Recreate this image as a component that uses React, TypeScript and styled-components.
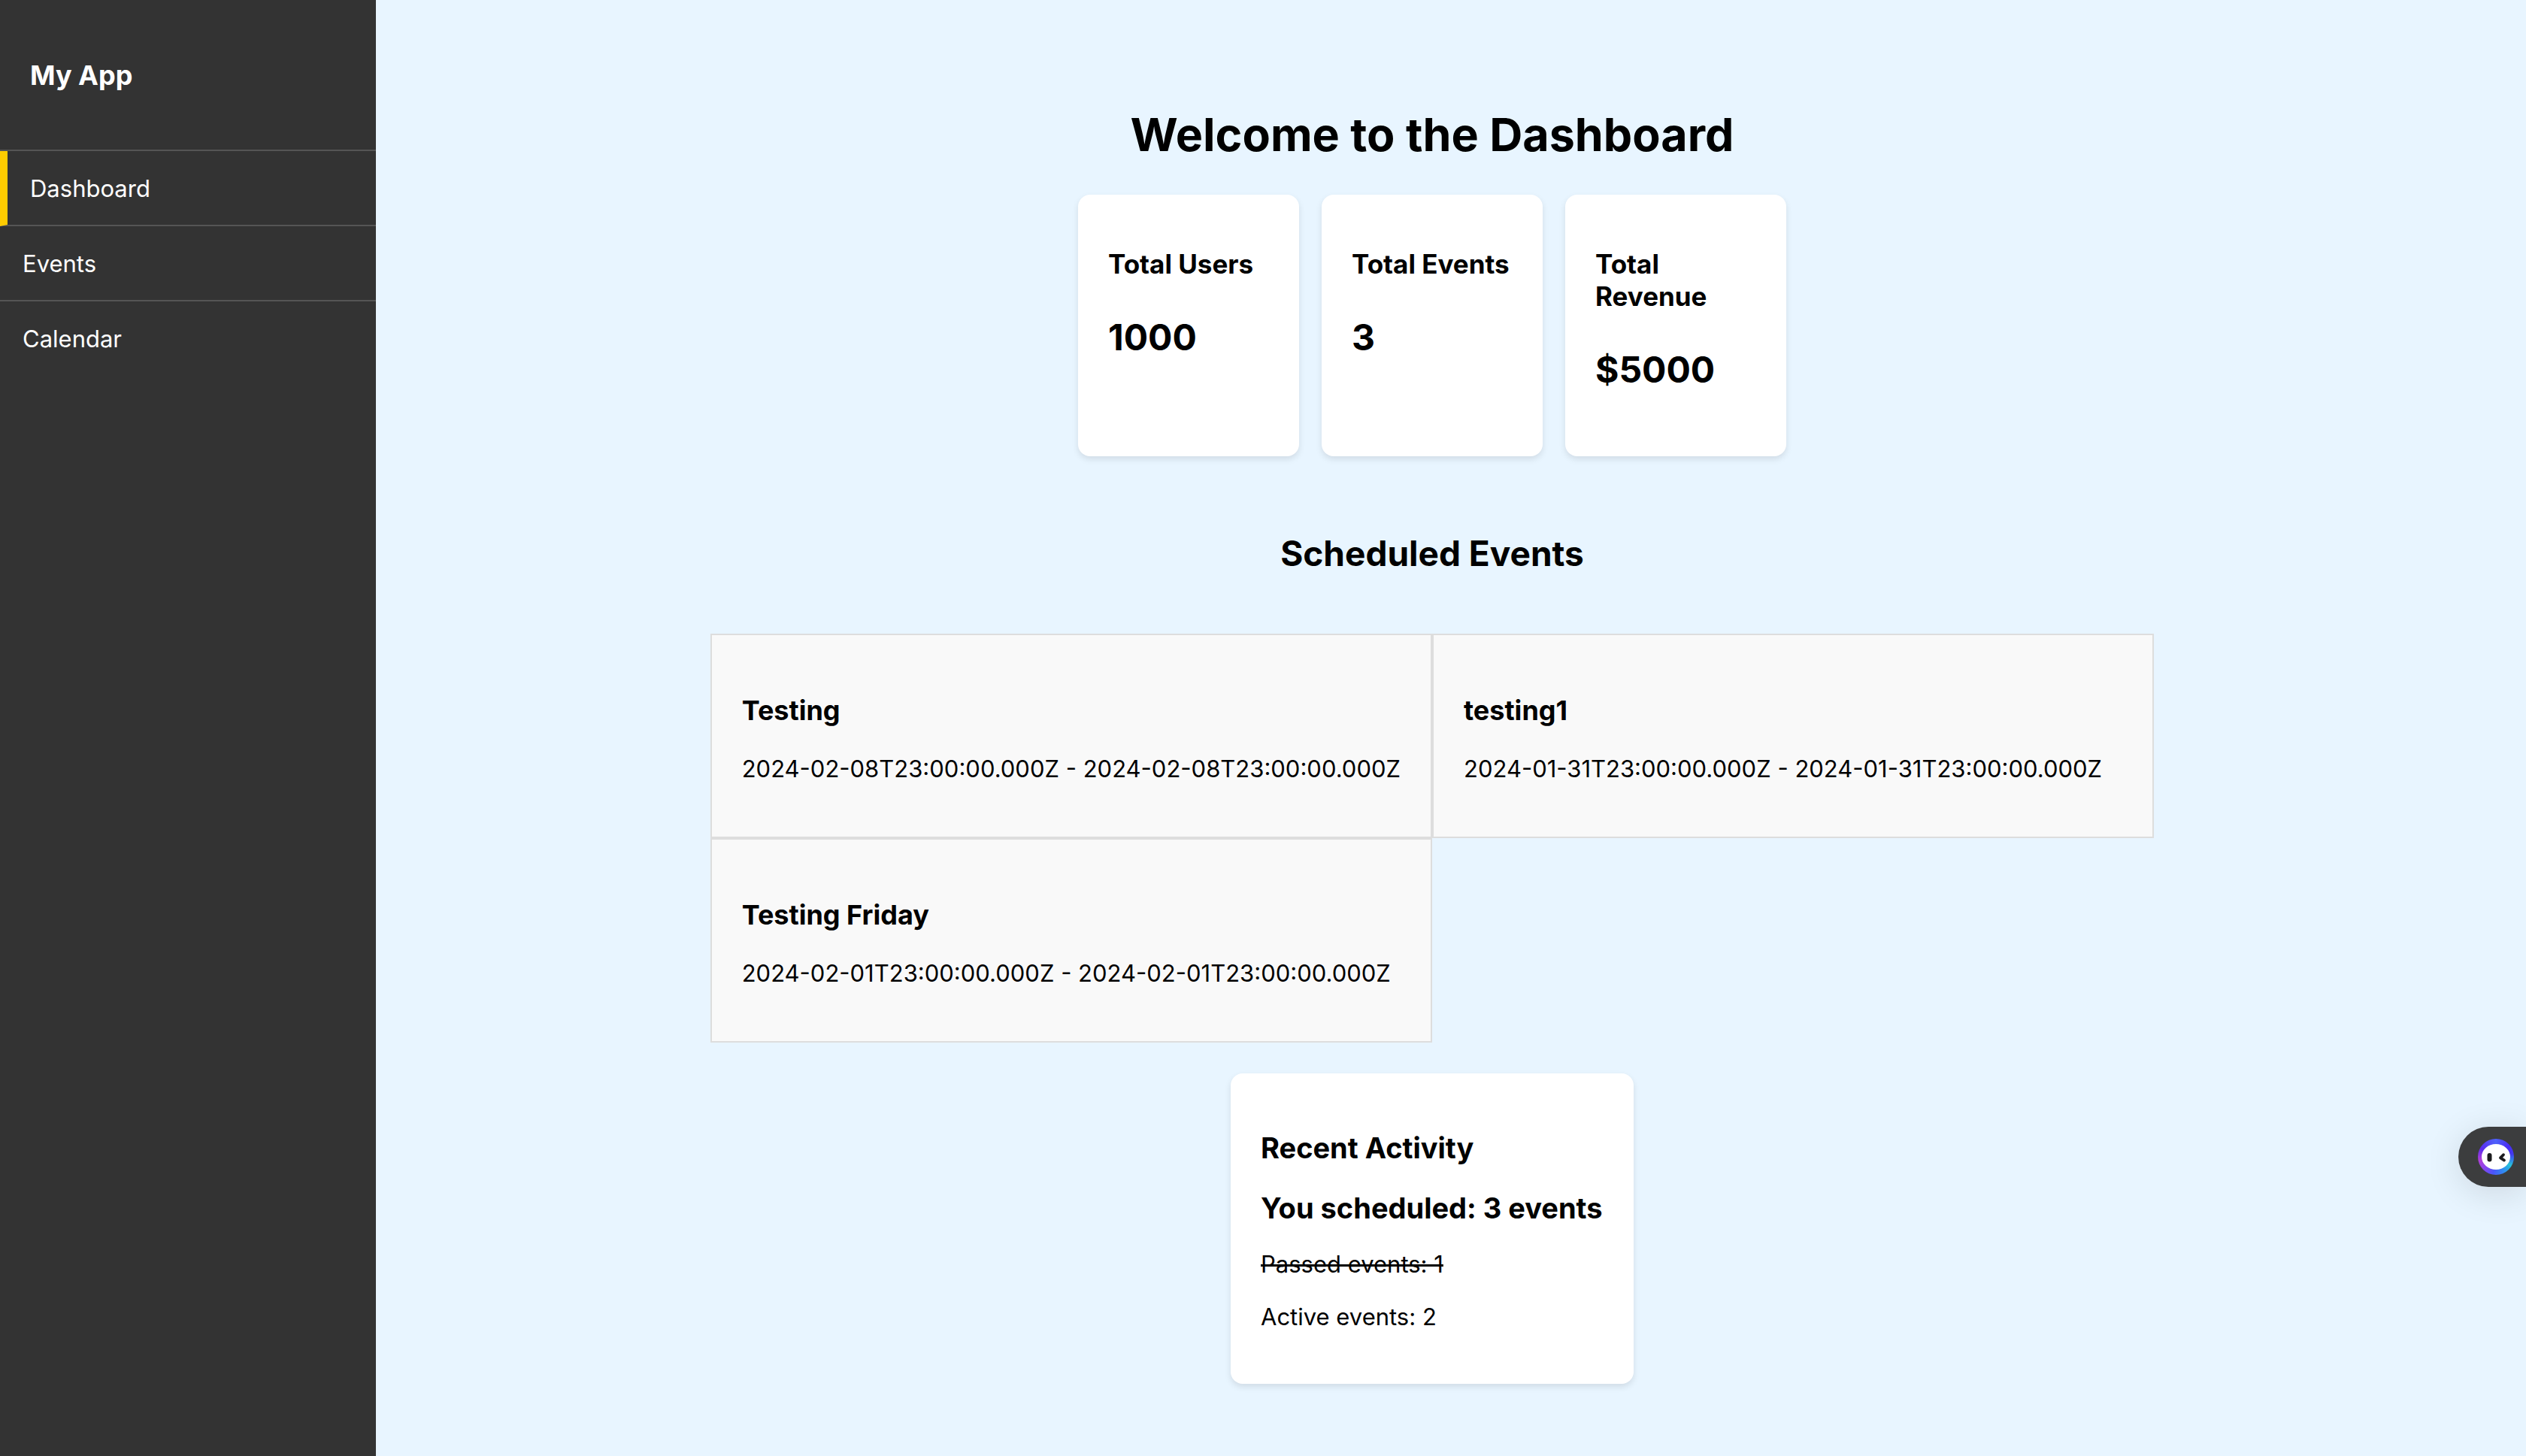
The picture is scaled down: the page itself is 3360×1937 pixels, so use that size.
import React from "react";
import styled, { createGlobalStyle } from "styled-components";

const GlobalStyle = createGlobalStyle`
  *, *::before, *::after {
    box-sizing: border-box;
  }
  body {
    margin: 0;
    background: #e8f5ff;
    color: #000;
    font-family: Inter, "Liberation Sans", sans-serif;
    font-size: 31px;
    line-height: 38px;
  }
  h1, h2, h3, p {
    margin: 0;
  }
`;

const Layout = styled.div`
  display: flex;
  min-height: 100vh;
`;

const Sidebar = styled.aside`
  flex: 0 0 500px;
  background: #333;
  color: #fff;
`;

const Brand = styled.h2`
  padding: 79px 40px 77px;
  border-bottom: 2px solid #555;
  font-size: 36px;
  line-height: 43px;
  font-weight: 700;
`;

const NavList = styled.ul`
  margin: 0;
  padding: 0;
  list-style: none;
`;

const NavLink = styled.a<{ $active?: boolean; $last?: boolean }>`
  display: block;
  padding: 31px 30px 29px;
  color: #fff;
  text-decoration: none;
  border-bottom: ${(p) => (p.$last ? "0" : "2px solid #555")};
  border-left: ${(p) => (p.$active ? "10px solid #fc0" : "0")};
`;

const Main = styled.main`
  flex: 1;
  display: flex;
  flex-direction: column;
  align-items: center;
  padding: 143px 50px 96px 0;
`;

const PageTitle = styled.h1`
  font-size: 61px;
  line-height: 73px;
  font-weight: 700;
`;

const Stats = styled.section`
  display: flex;
  gap: 30px;
  margin-top: 43px;
`;

const Panel = styled.div`
  display: flex;
  flex-direction: column;
  background: #fff;
  border-radius: 16px;
  box-shadow: 0 4px 8px rgba(0, 0, 0, 0.1);
`;

const StatCard = styled(Panel)`
  width: 294px;
  gap: 47px;
  padding: 71px 40px 86px;
`;

const StatLabel = styled.h3`
  font-size: 35px;
  line-height: 43px;
  font-weight: 700;
`;

const StatValue = styled.p`
  font-size: 48px;
  line-height: 58px;
  font-weight: 700;
`;

const SectionTitle = styled.h2`
  margin: 100px 0 78px;
  font-size: 46px;
  line-height: 58px;
  font-weight: 700;
`;

const EventGrid = styled.section`
  display: grid;
  grid-template-columns: 1fr 1fr;
`;

const EventCard = styled.article`
  display: flex;
  flex-direction: column;
  gap: 37px;
  padding: 78px 40px 71px;
  border: 2px solid #ddd;
  background: #f9f9f9;
`;

const EventName = styled.h3`
  font-size: 36px;
  line-height: 44px;
  font-weight: 700;
`;

const Activity = styled(Panel)`
  min-width: 536px;
  gap: 32px;
  margin-top: 41px;
  padding: 75px 40px 70px;
`;

const ActivityTitle = styled.h2`
  font-size: 38px;
  line-height: 48px;
  font-weight: 700;
`;

const Passed = styled.p`
  text-decoration: line-through;
  text-decoration-thickness: 3px;
`;

const Assistant = styled.button`
  position: fixed;
  right: 0;
  bottom: 358px;
  display: flex;
  align-items: center;
  width: 90px;
  height: 80px;
  padding: 0 0 0 26px;
  border: 0;
  border-radius: 40px 0 0 40px;
  background: #3c3d3e;
  box-shadow: 0 8px 48px rgba(0, 0, 0, 0.12);
`;

const Ring = styled.span`
  display: flex;
  width: 48px;
  height: 48px;
  border-radius: 50%;
  background: conic-gradient(
    #4d62fa 0deg,
    #4a2cf5 50deg,
    #4338f0 80deg,
    #25c3dc 120deg,
    #2f8df0 150deg,
    #4a55fa 190deg,
    #8a45ee 225deg,
    #b03fd8 260deg,
    #5a2cf0 300deg,
    #4d62fa 360deg
  );
`;

const stats = [
  { label: "Total Users", value: "1000" },
  { label: "Total Events", value: "3" },
  { label: "Total Revenue", value: "$5000" },
];

const events = [
  { name: "Testing", start: "2024-02-08T23:00:00.000Z", end: "2024-02-08T23:00:00.000Z" },
  { name: "testing1", start: "2024-01-31T23:00:00.000Z", end: "2024-01-31T23:00:00.000Z" },
  { name: "Testing Friday", start: "2024-02-01T23:00:00.000Z", end: "2024-02-01T23:00:00.000Z" },
];

export default function App() {
  return (
    <>
      <GlobalStyle />
      <Layout>
        <Sidebar>
          <Brand>My App</Brand>
          <nav>
            <NavList>
              <li><NavLink href="#dashboard" $active>Dashboard</NavLink></li>
              <li><NavLink href="#events">Events</NavLink></li>
              <li><NavLink href="#calendar" $last>Calendar</NavLink></li>
            </NavList>
          </nav>
        </Sidebar>
        <Main>
          <PageTitle>Welcome to the Dashboard</PageTitle>
          <Stats>
            {stats.map((s) => (
              <StatCard key={s.label}>
                <StatLabel>{s.label}</StatLabel>
                <StatValue>{s.value}</StatValue>
              </StatCard>
            ))}
          </Stats>
          <SectionTitle>Scheduled Events</SectionTitle>
          <EventGrid>
            {events.map((e) => (
              <EventCard key={e.name}>
                <EventName>{e.name}</EventName>
                <p>{e.start} - {e.end}</p>
              </EventCard>
            ))}
          </EventGrid>
          <Activity>
            <ActivityTitle>Recent Activity</ActivityTitle>
            <ActivityTitle as="h3">You scheduled: 3 events</ActivityTitle>
            <Passed>Passed events: 1</Passed>
            <p>Active events: 2</p>
          </Activity>
        </Main>
      </Layout>
      <Assistant type="button" aria-label="Open assistant">
        <Ring>
          <svg width="48" height="48" viewBox="0 0 48 48" aria-hidden="true">
            <ellipse cx="24" cy="24" rx="19" ry="17" fill="#fff" />
            <rect x="12.5" y="19" width="6" height="11.5" rx="3" fill="#1c1c1e" />
            <path
              d="M34 21.2 L30 25.4 L35 28.6"
              fill="none"
              stroke="#1c1c1e"
              strokeWidth="3.8"
              strokeLinecap="round"
              strokeLinejoin="round"
            />
          </svg>
        </Ring>
      </Assistant>
    </>
  );
}
